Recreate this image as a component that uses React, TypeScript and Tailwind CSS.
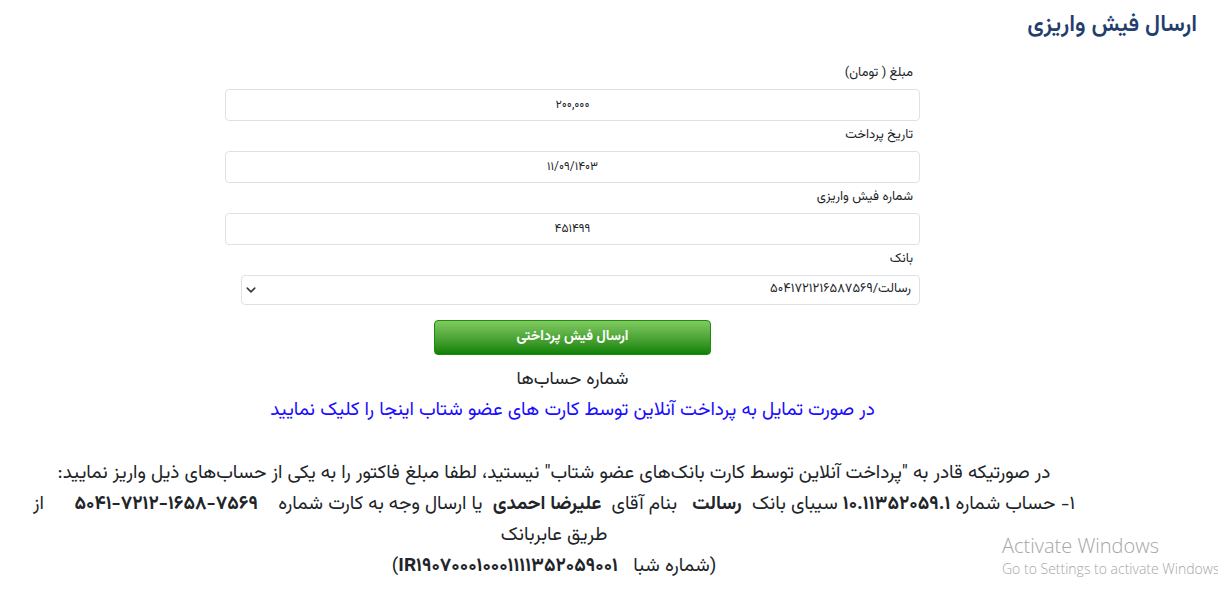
import React from 'react';

const fa = '[font-family:Vazirmatn,"Noto_Sans_Arabic","DejaVu_Sans",sans-serif]';

const Label = ({ children }: { children: React.ReactNode }) => (
  <div className="mt-[4px] mb-[6px] h-[20px] pr-[7px] text-[13px] leading-[20px] text-[#212529]">{children}</div>
);

const Field = ({ value }: { value: string }) => (
  <input
    readOnly
    value={value}
    className="block h-[32px] w-full rounded-[4px] border border-[#dee2e6] bg-white text-center text-[12px] text-[#212529] outline-none"
  />
);

export default function App() {
  return (
    <div dir="rtl" className={`relative h-[595px] w-full overflow-hidden bg-white ${fa}`}>
      {/* عنوان */}
      <h2 className="pr-[21px] pt-[9px] text-[23px] leading-[32px] font-semibold text-[#223e6d]">ارسال فیش واریزی</h2>

      {/* فرم */}
      <form className="mr-[298px] mt-[22px] w-[695px]">
        <Label>مبلغ ( تومان)</Label>
        <Field value="۲۰۰,۰۰۰" />
        <Label>تاریخ پرداخت</Label>
        <Field value="۱۱/۰۹/۱۴۰۳" />
        <Label>شماره فیش واریزی</Label>
        <Field value="۴۵۱۴۹۹" />
        <Label>بانک</Label>
        <div className="relative w-[679px]">
          <select className="block h-[30px] w-full appearance-none rounded-[4px] border border-[#dee2e6] bg-white pr-[8px] pl-[30px] text-[13px] text-[#212529] outline-none">
            <option>رسالت/۵۰۴۱۷۲۱۲۱۶۵۸۷۵۶۹</option>
          </select>
          <svg className="pointer-events-none absolute left-[4px] top-[10px] h-[10px] w-[12px]" viewBox="0 0 16 16">
            <path d="M2 5l6 6 6-6" fill="none" stroke="#343a40" strokeWidth="2.5" strokeLinecap="round" strokeLinejoin="round" />
          </svg>
        </div>

        <div className="mt-[15px] flex justify-center">
          <button
            type="button"
            className="h-[35px] w-[277px] rounded-[4px] border border-[#1d8a10] bg-gradient-to-b from-[#80cb60] to-[#078200] text-[14px] font-bold text-white"
          >
            ارسال فیش پرداختی
          </button>
        </div>

        <div className="mt-[11px] text-center text-[18px] leading-[28px] text-[#212529]">شماره حساب‌ها</div>
        <a href="#" className="mt-[2px] block text-center text-[19px] leading-[30px] text-[#1a0dff]">
          در صورت تمایل به پرداخت آنلاین توسط کارت های عضو شتاب اینجا را کلیک نمایید
        </a>
      </form>

      {/* توضیحات حساب */}
      <div className="mt-[32px] pr-[110px] text-center text-[19px] leading-[31px] text-[#212529]">
        در صورتیکه قادر به "پرداخت آنلاین توسط کارت بانک‌های عضو شتاب" نیستید، لطفا مبلغ فاکتور را به یکی از حساب‌های ذیل واریز نمایید:
        <br />
        ۱- حساب شماره <b>۱۰.۱۱۳۵۲۰۵۹.۱</b> سیبای بانک&nbsp; <b>رسالت</b>&nbsp;&nbsp; بنام آقای&nbsp; <b>علیرضا احمدی</b>&nbsp; یا ارسال وجه به کارت شماره&nbsp;&nbsp;&nbsp; <b dir="ltr" className="[unicode-bidi:isolate]">۵۰۴۱-۷۲۱۲-۱۶۵۸-۷۵۶۹</b>&nbsp;&nbsp;&nbsp;&nbsp;&nbsp; از
        <br />
        طریق عابربانک
        <br />
        (شماره شبا&nbsp;&nbsp; <b>IR۱۹۰۷۰۰۰۱۰۰۰۱۱۱۱۳۵۲۰۵۹۰۰۱</b>)
      </div>

      {/* واترمارک ویندوز */}
      <div dir="ltr" className="pointer-events-none absolute left-[1002px] top-[533px] whitespace-nowrap font-['Open_Sans',sans-serif] font-light text-[#a6a6a6]">
        <div className="text-[20px] leading-[26px]">Activate Windows</div>
        <div className="text-[14px] leading-[20px]">Go to Settings to activate Windows.</div>
      </div>
    </div>
  );
}
